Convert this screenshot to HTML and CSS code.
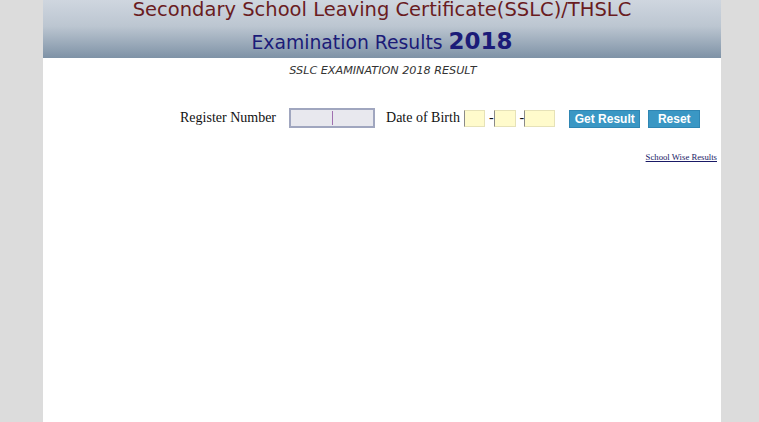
FILE: index.html
```html
<!DOCTYPE html>
<html>
<head>
<meta charset="utf-8">
<link rel="stylesheet" href="styles.css">
</head>
<body>
<div class="page">
  <div class="header">
    <div class="title1">Secondary School Leaving Certificate(SSLC)/THSLC</div>
    <div class="title2">Examination Results <b>2018</b></div>
  </div>
  <div class="subtitle">SSLC EXAMINATION 2018 RESULT</div>
  <div class="form">
    <span class="label">Register Number</span>
    <span class="reg"><span class="caret"></span></span>
    <span class="label dob">Date of Birth</span>
    <span class="box b1"></span>
    <span class="dash">-</span>
    <span class="box b2"></span>
    <span class="dash">-</span>
    <span class="box b3"></span>
    <span class="btn get">Get Result</span>
    <span class="btn reset">Reset</span>
  </div>
  <div class="links"><a href="#" class="school">School Wise Results</a></div>
</div>
</body>
</html>
```
FILE: styles.css
```css
html, body { margin: 0; padding: 0; }
body { background: #dcdcdc; height: 422px; overflow: hidden; }
.page {
  width: 678px;
  margin-left: 43px;
  background: #fff;
  height: 422px;
  display: flex;
  flex-direction: column;
}
.header {
  height: 58px;
  background: linear-gradient(to bottom, #cfd6df 0%, #bcc6d1 45%, #7e92a6 100%);
  display: flex;
  flex-direction: column;
  align-items: center;
  font-family: "DejaVu Sans", Tahoma, sans-serif;
  overflow: hidden;
}
.title1 {
  color: #6a1c1f;
  font-size: 19.5px;
  line-height: 20px;
  margin-top: 0;
}
.title2 {
  color: #1b1b78;
  font-size: 18.8px;
  line-height: 30px;
  margin-top: 6px;
}
.title2 b { font-size: 23px; }
.subtitle {
  text-align: center;
  font-family: "DejaVu Sans", Tahoma, sans-serif;
  font-style: italic;
  font-size: 11.2px;
  color: #333;
  margin-top: 6px;
  padding-left: 2px;
}
.form {
  display: flex;
  align-items: center;
  margin-top: 31px;
  padding-left: 137px;
  font-family: "Liberation Serif", "Times New Roman", serif;
  font-size: 14px;
  color: #111;
  height: 20px;
}
.label { margin-right: 13px; }
.reg {
  width: 82px;
  height: 16px;
  border: 2px solid #a0a6bf;
  background: #e8e8ee;
  position: relative;
  margin-right: 11px;
}
.caret {
  position: absolute;
  left: 41px;
  top: 1px;
  width: 1px;
  height: 14px;
  background: #a070b0;
}
.dob { margin-right: 4px; }
.box {
  height: 15px;
  background: #fffbcc;
  border: 1px solid #e6e2b8;
  border-left-color: #8a8a8a;
}
.b1 { width: 19px; margin-right: 4px; }
.b2 { width: 20px; margin-right: 4px; }
.b3 { width: 29px; margin-right: 14px; }
.btn {
  font-family: "Liberation Sans", Arial, sans-serif;
  font-weight: bold;
  font-size: 12px;
  color: #fff;
  background: #3a97c4;
  height: 16px;
  line-height: 16px;
  text-align: center;
  border: 1px solid #2f86b3;
  margin-top: 1px;
}
.get { width: 69px; margin-right: 8px; }
.reset { width: 50px; }
.links {
  text-align: right;
  padding-right: 4px;
  margin-top: 18px;
}
.school {
  font-family: "Liberation Serif", "Times New Roman", serif;
  font-size: 8.7px;
  color: #1a1a66;
}
```
